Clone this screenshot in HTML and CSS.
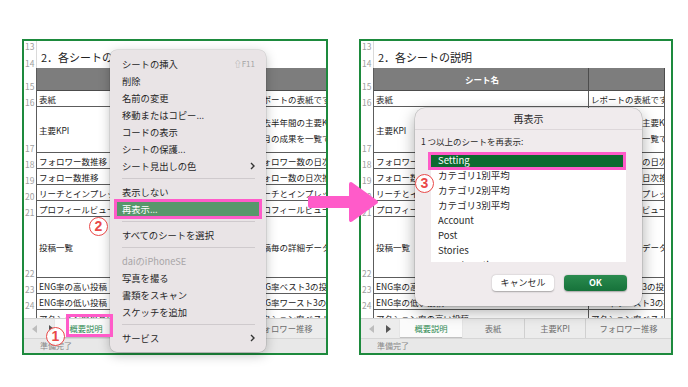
FILE: index.html
```html
<!DOCTYPE html>
<html lang="ja">
  <head>
    <meta charset="UTF-8" />
    <title>シートの再表示</title>
    <link rel="stylesheet" href="styles.css">
  </head>
  <body>
    <div class="stage">
      <!-- before: right click on the sheet tab -->
      <div class="panel panel-left">
        <div class="sheet">
          <div class="rows">
            <div class="row h5"><span class="rn">13</span><span class="c"></span><span class="c"></span></div>
            <div class="row h22"><span class="rn">14</span><span class="c title">2．各シートの説明</span><span class="c"></span></div>
            <div class="row h23 head"><span class="rn">15</span><span class="c">シート名</span><span class="c"></span></div>
            <div class="row t"><span class="rn">16</span><span class="c">表紙</span><span class="c">レポートの表紙です</span></div>
            <div class="row h46 t"><span class="rn">17</span><span class="c">主要KPI</span><span class="c multi"><span>過去半年間の主要KPIの推移</span><span>今月の成果を一覧で確認</span></span></div>
            <div class="row t"><span class="rn">18</span><span class="c">フォロワー数推移</span><span class="c">フォロワー数の日次推移</span></div>
            <div class="row t"><span class="rn">19</span><span class="c">フォロー数推移</span><span class="c">フォロー数の日次推移</span></div>
            <div class="row t"><span class="rn">20</span><span class="c">リーチとインプレッション</span><span class="c">リーチとインプレッション</span></div>
            <div class="row t"><span class="rn">21</span><span class="c">プロフィールビュー</span><span class="c">プロフィールビュー</span></div>
            <div class="row h61 t"><span class="rn">22</span><span class="c">投稿一覧</span><span class="c">投稿毎の詳細データ</span></div>
            <div class="row t"><span class="rn">23</span><span class="c">ENG率の高い投稿</span><span class="c">ENG率ベスト3の投稿</span></div>
            <div class="row t"><span class="rn">24</span><span class="c">ENG率の低い投稿</span><span class="c">ENG率ワースト3の投稿</span></div>
            <div class="row t"><span class="rn">25</span><span class="c">アクション率の高い投稿</span><span class="c">アクション率ベスト3の投稿</span></div>
          </div>
          <div class="tabs">
            <div class="tab-nav">
              <svg width="5" height="8" viewBox="0 0 5 8"><polygon points="5,0 5,8 0,4" fill="#bdbdbd"/></svg>
              <svg width="5" height="8" viewBox="0 0 5 8"><polygon points="0,0 5,4 0,8" fill="#555"/></svg>
            </div>
            <div class="tab active">概要説明</div>
            <div class="tab">表紙</div>
            <div class="tab sep">主要KPI</div>
            <div class="tab sep wide">フォロワー推移</div>
          </div>
          <div class="status">準備完了</div>
        </div>

        <div class="menu">
          <div class="menu-item">シートの挿入<span class="shortcut">⇧F11</span></div>
          <div class="menu-item">削除</div>
          <div class="menu-item">名前の変更</div>
          <div class="menu-item">移動またはコピー...</div>
          <div class="menu-item">コードの表示</div>
          <div class="menu-item">シートの保護...</div>
          <div class="menu-item">シート見出しの色
            <svg width="5" height="8" viewBox="0 0 5 8"><polyline points="1,1 4,4 1,7" fill="none" stroke="#333" stroke-width="1.4"/></svg>
          </div>
          <div class="menu-sep"></div>
          <div class="menu-item">表示しない</div>
          <div class="menu-item hl">再表示...</div>
          <div class="menu-sep"></div>
          <div class="menu-item">すべてのシートを選択</div>
          <div class="menu-sep"></div>
          <div class="menu-item muted">daiのiPhoneSE</div>
          <div class="menu-item">写真を撮る</div>
          <div class="menu-item">書類をスキャン</div>
          <div class="menu-item">スケッチを追加</div>
          <div class="menu-sep"></div>
          <div class="menu-item">サービス
            <svg width="5" height="8" viewBox="0 0 5 8"><polyline points="1,1 4,4 1,7" fill="none" stroke="#333" stroke-width="1.4"/></svg>
          </div>
        </div>

        <div class="mark mark-tab"></div>
        <div class="mark mark-menu"></div>
        <span class="num num-1">1</span>
        <span class="num num-2">2</span>
      </div>

      <!-- after: the unhide dialog -->
      <div class="panel panel-right">
        <div class="sheet">
          <div class="rows">
            <div class="row h5"><span class="rn">13</span><span class="c"></span><span class="c"></span></div>
            <div class="row h22"><span class="rn">14</span><span class="c title">2．各シートの説明</span><span class="c"></span></div>
            <div class="row h23 head"><span class="rn">15</span><span class="c">シート名</span><span class="c"></span></div>
            <div class="row t"><span class="rn">16</span><span class="c">表紙</span><span class="c">レポートの表紙です</span></div>
            <div class="row h46 t"><span class="rn">17</span><span class="c">主要KPI</span><span class="c multi"><span>過去半年間の主要KPIの推移</span><span>今月の成果を一覧で確認</span></span></div>
            <div class="row t"><span class="rn">18</span><span class="c">フォロワー数推移</span><span class="c">フォロワー数の日次推移</span></div>
            <div class="row t"><span class="rn">19</span><span class="c">フォロー数推移</span><span class="c">フォロー数の日次推移</span></div>
            <div class="row t"><span class="rn">20</span><span class="c">リーチとインプレッション</span><span class="c">リーチとインプレッション</span></div>
            <div class="row t"><span class="rn">21</span><span class="c">プロフィールビュー</span><span class="c">プロフィールビュー</span></div>
            <div class="row h61 t"><span class="rn">22</span><span class="c">投稿一覧</span><span class="c">投稿毎の詳細データ</span></div>
            <div class="row t"><span class="rn">23</span><span class="c">ENG率の高い投稿</span><span class="c">ENG率ベスト3の投稿</span></div>
            <div class="row t"><span class="rn">24</span><span class="c">ENG率の低い投稿</span><span class="c">ENG率ワースト3の投稿</span></div>
            <div class="row t"><span class="rn">25</span><span class="c">アクション率の高い投稿</span><span class="c">アクション率ベスト3の投稿</span></div>
          </div>
          <div class="tabs">
            <div class="tab-nav">
              <svg width="5" height="8" viewBox="0 0 5 8"><polygon points="5,0 5,8 0,4" fill="#bdbdbd"/></svg>
              <svg width="5" height="8" viewBox="0 0 5 8"><polygon points="0,0 5,4 0,8" fill="#555"/></svg>
            </div>
            <div class="tab active">概要説明</div>
            <div class="tab">表紙</div>
            <div class="tab sep">主要KPI</div>
            <div class="tab sep wide">フォロワー推移</div>
          </div>
          <div class="status">準備完了</div>
        </div>

        <div class="dialog">
          <div class="dialog-title">再表示</div>
          <div class="dialog-label">1 つ以上のシートを再表示:</div>
          <ul class="sheet-list">
            <li class="sel">Setting</li>
            <li>カテゴリ1別平均</li>
            <li>カテゴリ2別平均</li>
            <li>カテゴリ3別平均</li>
            <li>Account</li>
            <li>Post</li>
            <li>Stories</li>
            <li>Google Ratio</li>
          </ul>
          <div class="dialog-actions">
            <div class="btn">キャンセル</div>
            <div class="btn btn-ok">OK</div>
          </div>
        </div>

        <div class="mark mark-list"></div>
        <span class="num num-3">3</span>
      </div>

      <svg class="arrow" width="80" height="50" viewBox="0 0 80 50">
        <polygon points="6,20 47,20 47,6 72,24 47,42 47,28 6,28" fill="#ff5bc9" stroke="#ff5bc9" stroke-width="4" stroke-linejoin="round"/>
      </svg>
    </div>
  </body>
</html>
```

FILE: styles.css
```css
* {
  margin: 0;
  padding: 0;
  box-sizing: border-box;
}

body {
  background: #fff;
  font-family: "Noto Sans CJK JP", "Noto Sans", sans-serif;
  color: #1b1b1b;
}

.stage {
  position: relative;
  width: 688px;
  height: 387px;
  display: flex;
  align-items: flex-start;
  gap: 31px;
  padding: 39px 0 0 22px;
}

.panel {
  position: relative;
  height: 316px;
  border: 2px solid #1d8a3d;
}
.panel-left {
  width: 306px;
}
.panel-right {
  width: 314px;
}

.sheet {
  height: 100%;
  display: flex;
  flex-direction: column;
  overflow: hidden;
}

/* grid rows */
.rows {
  flex: none;
  height: 277px;
  overflow: hidden;
}

.row {
  display: grid;
  grid-template-columns: 13px 215px 76px 1fr;
  height: 16px;
}
.h5 { height: 5px; }
.h22 { height: 22px; }
.h23 { height: 23px; }
.h46 { height: 46px; }
.h61 { height: 61px; }

.rn {
  display: flex;
  align-items: flex-end;
  padding-left: 1px;
  font-size: 8.5px;
  line-height: 10px;
  color: #a0a0a0;
  border-right: 1px solid #dadada;
}

.c {
  display: flex;
  align-items: center;
  padding-left: 2px;
  font-size: 8.5px;
  white-space: nowrap;
  overflow: hidden;
}

.c.title {
  padding-left: 4px;
  font-size: 11px;
  overflow: visible;
  color: #222;
}

.t .rn,
.head .rn {
  border-right-color: #5c5c5c;
}
.t .c {
  border-right: 1px solid #5c5c5c;
  border-bottom: 1px solid #5c5c5c;
}

.head .c {
  background: #7d7d7d;
  border-right: 1px solid #4c4c4c;
  border-bottom: 1px solid #4c4c4c;
  justify-content: center;
  color: #fff;
  font-weight: bold;
}

.c.multi {
  flex-direction: column;
  align-items: flex-start;
  justify-content: center;
  line-height: 16px;
}

/* sheet tabs */
.tabs {
  flex: none;
  height: 20px;
  display: flex;
  background: #ececec;
  border-top: 1px solid #d2d2d2;
}

.tab-nav {
  width: 44px;
  display: flex;
  align-items: center;
  gap: 12px;
  padding-left: 8px;
}

.tab {
  flex: none;
  width: 62px;
  text-align: center;
  font-size: 8.3px;
  line-height: 18px;
  color: #6e6e6e;
}
.tab.active {
  background: #fbfbfb;
  color: #2e8a52;
  height: 18px;
  box-shadow: 0 1px 1px rgba(0, 0, 0, 0.18);
}
.tab.sep {
  width: 61px;
  border-left: 1px solid #d0d0d0;
}
.tab.wide {
  width: 86px;
}

.status {
  flex: none;
  height: 15px;
  background: #e8e8e8;
  border-top: 1px solid #d6d6d6;
  padding-left: 16px;
  font-size: 8px;
  line-height: 14px;
  color: #8a8a8a;
}

/* context menu */
.menu {
  position: absolute;
  left: 86px;
  top: 9px;
  width: 156px;
  height: 302px;
  padding: 5px 0;
  background: #e9e4e6;
  border-radius: 7px;
  box-shadow: 0 3px 12px rgba(0, 0, 0, 0.25), 0 0 0 0.5px rgba(0, 0, 0, 0.15);
  font-size: 9.3px;
  color: #262626;
}

.menu-item {
  height: 17px;
  display: flex;
  align-items: center;
  justify-content: space-between;
  padding: 0 11px 0 12px;
  white-space: nowrap;
}
.menu-item.hl {
  margin: 0 5px;
  padding-left: 7px;
  background: #58976b;
  color: #fff;
}
.menu-item.muted {
  color: #a8a4a6;
}

.shortcut {
  font-size: 8px;
  color: #a5a5a5;
}

.menu-sep {
  height: 1px;
  margin: 4px 11px 4px 12px;
  background: #cfcacd;
}

/* unhide dialog */
.dialog {
  position: absolute;
  left: 54px;
  top: 67px;
  width: 227px;
  height: 198px;
  display: flex;
  flex-direction: column;
  background: #f0ebed;
  border-radius: 10px;
  box-shadow: 0 5px 16px rgba(0, 0, 0, 0.35), 0 0 0 0.5px rgba(0, 0, 0, 0.2);
  color: #2a2a2a;
}

.dialog-title {
  height: 22px;
  line-height: 22px;
  text-align: center;
  font-size: 10px;
  border-bottom: 1px solid #ddd7da;
}

.dialog-label {
  margin: 5px 0 0 6px;
  font-size: 8.5px;
  line-height: 12px;
}

.sheet-list {
  list-style: none;
  margin: 5px 0 0 16px;
  width: 195px;
  height: 110px;
  padding-top: 1px;
  background: #fff;
  overflow: hidden;
}
.sheet-list li {
  height: 15px;
  line-height: 15px;
  padding-left: 7px;
  font-size: 9.5px;
}
.sheet-list .sel {
  margin-right: 3px;
  background: #0d6a2f;
  color: #fff;
}

.dialog-actions {
  display: flex;
  justify-content: flex-end;
  gap: 10px;
  margin-top: 13px;
  padding-right: 15px;
}

.btn {
  width: 62px;
  height: 16px;
  border-radius: 4px;
  background: #fff;
  box-shadow: 0 0.5px 1.5px rgba(0, 0, 0, 0.3);
  text-align: center;
  font-size: 9px;
  line-height: 16px;
}
.btn-ok {
  width: 63px;
  background: linear-gradient(#2b8b4f, #16723a);
  color: #fff;
  font-weight: bold;
}

/* annotations */
.mark {
  position: absolute;
  border: 3px solid #ff5bc9;
}
.mark-tab {
  left: 42px;
  top: 273px;
  width: 47px;
  height: 23px;
}
.mark-menu {
  left: 90px;
  top: 158px;
  width: 148px;
  height: 20px;
}
.mark-list {
  left: 67px;
  top: 111px;
  width: 198px;
  height: 18px;
}

.num {
  position: absolute;
  width: 19px;
  height: 19px;
  border-radius: 50%;
  border: 1.2px solid #e94848;
  background: rgba(255, 255, 255, 0.9);
  color: #e94848;
  font: bold 14px/17px "Liberation Sans", sans-serif;
  text-align: center;
}
.num-1 {
  left: 22px;
  top: 286px;
}
.num-2 {
  left: 65px;
  top: 176px;
}
.num-3 {
  left: 54px;
  top: 133px;
}

.arrow {
  position: absolute;
  left: 304px;
  top: 178px;
}
```
